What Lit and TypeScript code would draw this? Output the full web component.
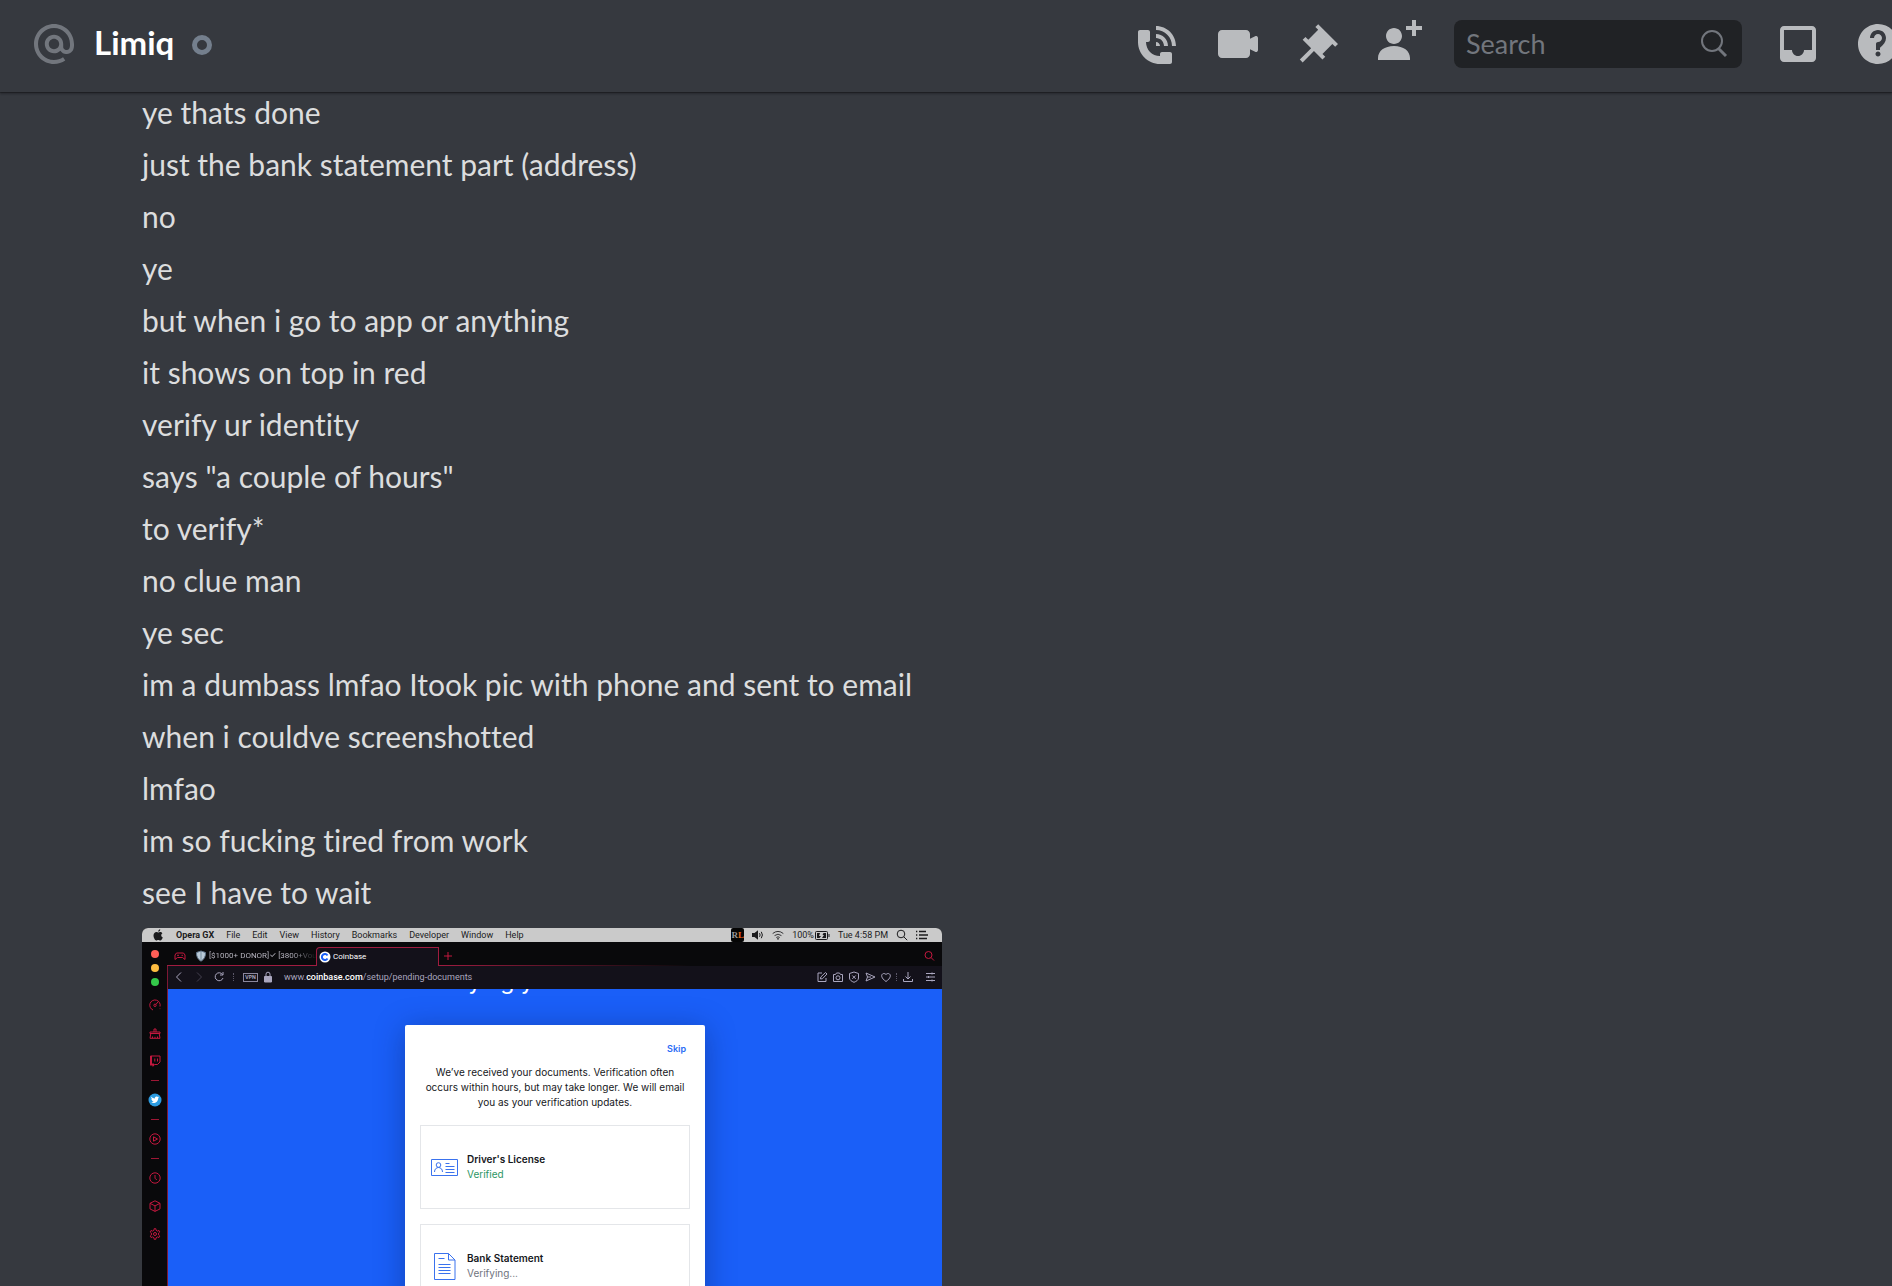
import { LitElement, html, svg, css } from "lit";
import { customElement, property } from "lit/decorators.js";

const messages = [
  "ye thats done",
  "just the bank statement part (address)",
  "no",
  "ye",
  "but when i go to app or anything",
  "it shows on top in red",
  "verify ur identity",
  'says "a couple of hours"',
  "to verify*",
  "no clue man",
  "ye sec",
  "im a dumbass lmfao Itook pic with phone and sent to email",
  "when i couldve screenshotted",
  "lmfao",
  "im so fucking tired from work",
  "see I have to wait",
];

const headerIcons = {
  at: svg`<path d="M12 2C6.486 2 2 6.486 2 12C2 17.515 6.486 22 12 22C14.039 22 15.993 21.398 17.652 20.259L16.521 18.611C15.195 19.519 13.633 20 12 20C7.589 20 4 16.411 4 12C4 7.589 7.589 4 12 4C16.411 4 20 7.589 20 12V12.782C20 14.17 19.402 15 18.4 15L18.398 15.018C18.338 15.005 18.273 15 18.209 15H18C17.437 15 16.6 14.182 16.6 13.631V12C16.6 9.464 14.537 7.4 12 7.4C9.463 7.4 7.4 9.463 7.4 12C7.4 14.537 9.463 16.6 12 16.6C13.234 16.6 14.35 16.106 15.177 15.313C15.826 16.269 16.93 17 18 17L18.002 16.981C18.064 16.994 18.129 17 18.195 17H18.4C20.552 17 22 15.306 22 12.782V12C22 6.486 17.514 2 12 2ZM12 14.599C10.566 14.599 9.4 13.433 9.4 11.999C9.4 10.565 10.566 9.399 12 9.399C13.434 9.399 14.6 10.565 14.6 11.999C14.6 13.433 13.434 14.599 12 14.599Z"/>`,
  call: svg`<path d="M11 5V3C16.515 3 21 7.486 21 13H19C19 8.589 15.411 5 11 5ZM17 13H15C15 10.795 13.206 9 11 9V7C14.309 7 17 9.691 17 13ZM11 11V13H13C13 11.896 12.105 11 11 11ZM14 16H18C18.553 16 19 16.447 19 17V21C19 21.553 18.553 22 18 22H13C6.925 22 2 17.075 2 11V6C2 5.447 2.448 5 3 5H7C7.553 5 8 5.447 8 6V10C8 10.553 7.553 11 7 11H6C6.063 14.938 9 18 13 18V17C13 16.447 13.447 16 14 16Z"/>`,
  video: svg`<path d="M21.526 8.149C21.231 7.966 20.862 7.951 20.553 8.105L18 9.382V7C18 5.897 17.103 5 16 5H4C2.897 5 2 5.897 2 7V17C2 18.104 2.897 19 4 19H16C17.103 19 18 18.104 18 17V14.618L20.553 15.894C20.694 15.965 20.847 16 21 16C21.183 16 21.365 15.949 21.526 15.851C21.82 15.668 22 15.347 22 15V9C22 8.653 21.82 8.332 21.526 8.149Z"/>`,
  pin: svg`<path d="M22 12L12.101 2.101L10.686 3.514L12.101 4.929L7.151 9.878V9.88L5.736 8.465L4.322 9.88L8.565 14.122L2.908 19.778L4.322 21.192L9.979 15.536L14.222 19.778L15.636 18.364L14.222 16.95L19.171 12H19.172L20.586 13.414L22 12Z"/>`,
  add: svg`<path d="M21 3H24V5H21V8H19V5H16V3H19V0H21V3ZM10 12C12.205 12 14 10.205 14 8C14 5.795 12.205 4 10 4C7.795 4 6 5.795 6 8C6 10.205 7.795 12 10 12ZM10 13C5.289 13 2 15.467 2 19V20H18V19C18 15.467 14.711 13 10 13Z"/>`,
  inbox: svg`<path d="M19 3H4.99C3.88 3 3.01 3.89 3.01 5L3 19C3 20.1 3.88 21 4.99 21H19C20.1 21 21 20.1 21 19V5C21 3.89 20.1 3 19 3ZM19 15H15C15 16.66 13.65 18 12 18C10.35 18 9 16.66 9 15H4.99V5H19V15Z"/>`,
  help: svg`<path d="M12 2C6.486 2 2 6.487 2 12C2 17.515 6.486 22 12 22C17.514 22 22 17.515 22 12C22 6.487 17.514 2 12 2ZM12 18.25C11.31 18.25 10.75 17.691 10.75 17C10.75 16.31 11.31 15.75 12 15.75C12.69 15.75 13.25 16.31 13.25 17C13.25 17.691 12.69 18.25 12 18.25ZM13 13.875V15H11V12C11 11.448 11.448 11 12 11C13.104 11 14 10.103 14 9C14 7.896 13.104 7 12 7C10.896 7 10 7.896 10 9H8C8 6.795 9.795 5 12 5C14.205 5 16 6.795 16 9C16 10.861 14.723 12.429 13 13.875Z"/>`,
};

const icon24 = (body: unknown) =>
  html`<svg class="icon" viewBox="0 0 24 24" aria-hidden="true">${body}</svg>`;

@customElement("chat-header")
class ChatHeader extends LitElement {
  static styles = css`
    :host {
      display: block;
      position: relative;
      z-index: 1;
      box-shadow: 0 1px 0 rgba(4, 4, 5, 0.25), 0 2px 2px rgba(4, 4, 5, 0.3);
    }
    .bar {
      display: flex;
      align-items: center;
      height: 92px;
      padding: 0 0 4px 30px;
      box-sizing: border-box;
      overflow: hidden;
      background: #36393f;
    }
    .icon {
      display: block;
      width: 48px;
      height: 48px;
      fill: currentColor;
      overflow: visible;
    }
    .at {
      color: #72767d;
    }
    .name {
      margin: 0 0 4px 16px;
      font: 700 33px/40px Lato, "Open Sans", sans-serif;
      color: #fff;
    }
    .status {
      width: 20px;
      height: 20px;
      margin: 2px 0 0 18px;
      box-sizing: border-box;
      border: 5px solid #747f8d;
      border-radius: 50%;
    }
    .tools {
      display: flex;
      flex: none;
      gap: 32px;
      margin: 0 -10px 0 auto;
    }
    button {
      display: block;
      padding: 0;
      border: 0;
      background: none;
      color: #b9bbbe;
      cursor: pointer;
    }
    .search {
      display: flex;
      align-items: center;
      width: 288px;
      height: 48px;
      padding: 0 14px 0 12px;
      box-sizing: border-box;
      border-radius: 8px;
      background: #202225;
      color: #72767d;
    }
    input {
      flex: 1;
      min-width: 0;
      padding: 0;
      border: 0;
      outline: 0;
      background: none;
      color: #dcddde;
      font: 400 27px/40px Lato, "Open Sans", sans-serif;
    }
    input::placeholder {
      color: #72767d;
      opacity: 1;
    }
    .glass {
      width: 32px;
      height: 32px;
      fill: none;
      stroke: currentColor;
      stroke-width: 2;
    }
  `;

  private tool(label: string, body: unknown) {
    return html`<button type="button" aria-label=${label}>${icon24(body)}</button>`;
  }

  render() {
    return html`
      <header class="bar">
        <span class="at">${icon24(headerIcons.at)}</span>
        <h1 class="name">Limiq</h1>
        <span class="status" role="img" aria-label="Offline"></span>
        <div class="tools">
          ${this.tool("Start voice call", headerIcons.call)}
          ${this.tool("Start video call", headerIcons.video)}
          ${this.tool("Pinned messages", headerIcons.pin)}
          ${this.tool("Add friends to DM", headerIcons.add)}
          <label class="search">
            <input type="text" placeholder="Search" aria-label="Search" />
            <svg class="glass" viewBox="0 0 32 32" aria-hidden="true">
              <circle cx="16" cy="13" r="10" />
              <path d="M22 20l8 8" stroke-width="3" />
            </svg>
          </label>
          ${this.tool("Inbox", headerIcons.inbox)} ${this.tool("Help", headerIcons.help)}
        </div>
      </header>
    `;
  }
}

const s = (body: unknown, cls = "") =>
  html`<svg class="ico ${cls}" viewBox="0 0 12 12" aria-hidden="true">${body}</svg>`;

const railIcons = [
  ["Limiter", svg`<path d="M4 11A5.2 5.2 0 1 1 11 7.500M11 9.500v.6"/><circle cx="6" cy="6.300" r="1.200"/><path d="M7 5.300l2-2.300"/>`],
  ["Cleaner", svg`<path d="M1 5h10v1.500H1zM1.800 6.500L1 11.300h10l-.8-4.800M5 5V2h2v3M3.500 11V9.500M6 11V9.800M8.500 11V9.500"/>`],
  ["Twitch", svg`<path d="M1.500 1h9.500v6l-2.500 2.500h-3L4 11.300V9.500H1.500z"/><path d="M2 1v8.500h3" stroke-width="2"/><path d="M5.800 3.500v3M8.500 3.500v3"/>`],
] as const;

const railTools = [
  ["History", svg`<circle cx="6" cy="6" r="5.200"/><path d="M6 3v3.200l1.800 1.800"/>`],
  ["Extensions", svg`<path d="M6 .8l5 2.500v5.600l-5 2.500-5-2.500V3.300zM1 3.300l5 2.600 5-2.600M6 5.900v5.400"/>`],
  ["Settings", svg`<path d="M4.900 2.300L5.200.7h1.600l.3 1.600 1.300.8 1.600-.6.8 1.400-1.200 1.100v2l1.200 1.100-.8 1.400-1.600-.6-1.300.8-.3 1.600H5.200l-.3-1.600-1.300-.8-1.600.6-.8-1.400L2.400 7V5L1.200 3.900 2 2.500l1.600.6z"/><circle cx="6" cy="6" r="1.500"/>`],
] as const;

@customElement("browser-shot")
class BrowserShot extends LitElement {
  static styles = css`
    :host {
      display: block;
      border-radius: 6px 6px 0 0;
      overflow: hidden;
      background: #09090b;
      color: #1b1b1d;
      font: 400 9px/14px Roboto, Inter, sans-serif;
    }
    .row {
      display: flex;
      align-items: center;
    }
    button {
      display: flex;
      align-items: center;
      justify-content: center;
      padding: 0;
      border: 0;
      background: none;
      color: inherit;
      font: inherit;
      white-space: nowrap;
    }
    .ico {
      display: block;
      flex: none;
      width: 12px;
      height: 12px;
      fill: none;
      stroke: currentColor;
      stroke-width: 1;
    }
    .solid {
      fill: currentColor;
      stroke: none;
    }
    .menubar {
      gap: 12px;
      height: 14px;
      padding: 0 14px 0 10px;
      background: #cacaca;
    }
    .menubar .app {
      font-weight: 700;
    }
    .tray {
      display: flex;
      align-items: center;
      gap: 8px;
      margin-left: auto;
    }
    .badge {
      width: 13px;
      height: 14px;
      border-radius: 2px;
      background: #050505;
      color: #9a9a9a;
      font: 700 9px/14px "Liberation Serif", serif;
      text-align: center;
    }
    .badge b {
      color: #e8641f;
    }
    .power {
      display: flex;
      align-items: center;
      gap: 1px;
    }
    .battery {
      width: 15px;
      height: 9px;
    }
    .window {
      display: grid;
      grid-template-columns: 25px 1fr;
    }
    .rail {
      display: flex;
      flex-direction: column;
      align-items: center;
      color: #c4183f;
    }
    .lights {
      display: flex;
      flex-direction: column;
      gap: 6px;
      padding-top: 8px;
    }
    .light {
      width: 8px;
      height: 8px;
      border-radius: 50%;
      background: #ff5f57;
    }
    .light.min {
      background: #fdbc40;
    }
    .light.max {
      background: #34c84a;
    }
    .group {
      display: flex;
      flex-direction: column;
      gap: 16px;
      padding: 13px 0;
    }
    .rule {
      width: 8px;
      height: 1px;
      background: #9e1735;
    }
    .bird {
      width: 14px;
      height: 14px;
      margin: 12px 0;
    }
    .body {
      min-width: 0;
    }
    .tabs {
      display: flex;
      align-items: stretch;
      height: 24px;
      color: #cfccd9;
      font-size: 8px;
    }
    .tab {
      display: flex;
      align-items: center;
      justify-content: flex-start;
      gap: 2px;
      border-bottom: 1px solid #a01c40;
      box-sizing: border-box;
      padding-top: 4px;
    }
    .start {
      width: 25px;
      color: #c4183f;
      justify-content: center;
    }
    .donor {
      width: 124px;
      padding-left: 3px;
      color: #b5b3bd;
    }
    .donor .label {
      white-space: nowrap;
      -webkit-mask-image: linear-gradient(90deg, #000 75%, transparent);
      mask-image: linear-gradient(90deg, #000 75%, transparent);
    }
    .current {
      width: 123px;
      height: 19px;
      margin-top: 5px;
      padding: 0 2px;
      border: 1px solid #a01c40;
      border-bottom: 0;
      border-top-left-radius: 4px;
      background: #13111a;
      color: #fff;
    }
    .rest {
      flex: 1;
      justify-content: space-between;
      padding: 4px 7px 0 3px;
      color: #c4183f;
      border-image: linear-gradient(90deg, #a01c40, transparent 50%) 1;
    }
    .address {
      gap: 8px;
      height: 23px;
      padding: 0 6px 1px 5px;
      box-sizing: border-box;
      border-left: 1px solid #7d1834;
      background: #13111a;
      color: #aaa6be;
    }
    .address .nav {
      display: flex;
      gap: 8px;
    }
    .dots {
      width: 2px;
      height: 8px;
      border-left: 1px dotted #5c586a;
      box-sizing: border-box;
    }
    .dim {
      color: #44414f;
    }
    .vpn {
      width: 15px;
      height: 9px;
      border: 1px solid #8b879d;
      box-sizing: border-box;
      font: 700 5px/7px Inter, sans-serif;
      text-align: center;
    }
    .secure {
      display: flex;
      align-items: center;
      gap: 4px;
    }
    .url b {
      color: #fff;
      font-weight: 500;
    }
    .url {
      margin-left: 2px;
      white-space: nowrap;
    }
    .actions {
      display: flex;
      align-items: center;
      gap: 4px;
      margin-left: auto;
    }
    .actions .wide {
      margin-left: 6px;
    }
    .page {
      display: flex;
      flex-direction: column;
      align-items: center;
      height: 420px;
      overflow: hidden;
      border-left: 1px solid #7d1834;
      background: #1a5ff8;
    }
    .heading {
      height: 5px;
      margin: 0 0 31px;
      padding-left: 4px;
      display: flex;
      align-items: flex-end;
      overflow: hidden;
      color: #fff;
      font: 400 23px/25px Inter, sans-serif;
    }
    .card {
      display: flex;
      flex-direction: column;
      width: 300px;
      height: 380px;
      flex: none;
      padding: 16px 15px;
      box-sizing: border-box;
      border-radius: 2px;
      background: #fff;
      color: #16181c;
      box-shadow: 0 4px 30px rgba(10, 30, 90, 0.4);
      font: 400 10px/15px Inter, sans-serif;
    }
    .skip {
      align-self: flex-end;
      margin-right: 4px;
      color: #2b6cf6;
      font-weight: 600;
      font-size: 9px;
      text-decoration: none;
    }
    .note {
      margin: 9px 0 15px;
      text-align: center;
    }
    .doc {
      display: flex;
      align-items: center;
      gap: 9px;
      height: 84px;
      margin-bottom: 15px;
      padding: 0 10px;
      box-sizing: border-box;
      border: 1px solid #e4e6e9;
    }
    .doc svg {
      width: 27px;
      height: 27px;
      fill: none;
      stroke: #3a72ee;
      stroke-width: 1;
    }
    .doc h2,
    .doc p {
      margin: 0;
      font-size: 10px;
      line-height: 15px;
    }
    .doc h2 {
      font-weight: 600;
    }
    .verified {
      color: #2d9664;
    }
    .pending {
      color: #70747e;
    }
  `;

  render() {
    return html`
      <div class="menubar row">
        ${s(svg`<path d="M8.200 3c.8 0 1.700.4 2.200 1.200-1.800 1.100-1.500 3.500.4 4.300-.5 1.300-1.500 2.900-2.500 2.900-.8 0-1-.5-2-.5s-1.300.5-2 .5C3 11.400 1.500 8.800 1.500 6.500S3 3 4.400 3c.8 0 1.400.5 2 .5S7.400 3 8.200 3zM6.300 2.700C6.200 1.500 7.100.5 8.200.3 8.400 1.600 7.300 2.700 6.300 2.700z"/>`, "solid")}
        <button type="button" class="app">Opera GX</button>
        ${["File", "Edit", "View", "History", "Bookmarks", "Developer", "Window", "Help"].map(
          (m) => html`<button type="button">${m}</button>`
        )}
        <div class="tray">
          <span class="badge">R<b>L</b></span>
          ${s(svg`<path d="M0 4h2.500L6 1.300v9.400L2.500 8H0z" fill="currentColor" stroke="none"/><path d="M7.500 4.200q1.300 1.800 0 3.600M9.300 2.800q2.200 3.200 0 6.400"/>`)}
          <svg class="ico" viewBox="0 0 14 12" aria-hidden="true"><path d="M.8 4.300q6.200-5 12.400 0M3 6.700q4-3.300 8 0M5 8.900q2-1.600 4 0"/><circle cx="7" cy="10.500" r=".6"/></svg>
          <span class="power">100%
            <svg class="battery" viewBox="0 0 15 9" aria-hidden="true"><rect x=".5" y=".5" width="12" height="8" rx="1" fill="none" stroke="#1b1b1d"/><path d="M2 2h3L4 5h2L4.500 7H2zM8.500 2H11v5H7l2-3H7.500zM13.500 3v3h1V3z" fill="#1b1b1d"/></svg>
          </span>
          <span>Tue 4:58 PM</span>
          ${s(svg`<circle cx="5" cy="5" r="3.800"/><path d="M7.800 7.800l3.400 3.400"/>`)}
          ${s(svg`<path d="M0 2.500h1.300M0 6h1.300M0 9.500h1.300M3 2.500h7M3 6h9M3 9.500h8" stroke-width="1.500"/>`)}
        </div>
      </div>
      <div class="window">
        <nav class="rail" aria-label="Sidebar">
          <div class="lights">
            <span class="light"></span><span class="light min"></span><span class="light max"></span>
          </div>
          <div class="group">
            ${railIcons.map(([l, b]) => html`<button type="button" aria-label=${l}>${s(b)}</button>`)}
          </div>
          <span class="rule"></span>
          <svg class="bird" viewBox="0 0 14 14" role="img" aria-label="Twitter">
            <circle cx="7" cy="7" r="6.500" fill="#2c9be0" />
            <path fill="#fff" d="M3.300 3.800C4.400 5 5.500 5.400 6.900 5.500c-.3-1.500 1.600-2.600 2.800-1.500l1.200-.3-.7 1 .8-.1-.9.9c.1 3.400-3.400 5.700-6.900 4 1 0 1.700-.2 2.400-.7-.8-.1-1.400-.5-1.600-1.200h.7C3.900 7.300 3.400 6.700 3.400 5.900l.7.200C3.300 5.500 3 4.600 3.300 3.800z" />
          </svg>
          <span class="rule"></span>
          <div class="group">
            <button type="button" aria-label="Player">
              ${s(svg`<circle cx="6" cy="6" r="5.200"/><path d="M4.500 3.800L8.500 6l-4 2.200z"/>`)}
            </button>
          </div>
          <span class="rule"></span>
          <div class="group">
            ${railTools.map(([l, b]) => html`<button type="button" aria-label=${l}>${s(b)}</button>`)}
          </div>
        </nav>
        <div class="body">
          <div class="tabs">
            <button type="button" class="tab start" aria-label="GX Corner">
              ${s(svg`<path d="M2.500 3h7L11 5v4.500L8.500 7.500h-5L1 9.500V5zM3 5.300h2M7.500 5.300h1.500"/>`)}
            </button>
            <button type="button" class="tab donor">
              <svg class="ico" viewBox="0 0 12 12" aria-hidden="true"><path d="M6 1l4.500 1.500c.3 4-1.500 7-4.500 8.700C3 9.500 1.200 6.500 1.500 2.500z" fill="#b9cad8" stroke="#5e7388"/><path d="M6 2v8" stroke="#78909f"/></svg>
              <span class="label">[$1000+ DONOR]✓ [3800+Vou</span>
            </button>
            <button type="button" class="tab current">
              <svg class="ico" viewBox="0 0 12 12" aria-hidden="true"><circle cx="6" cy="6" r="5.500" fill="#fff" stroke="none"/><path d="M8.500 4.500a3 3 0 1 0 0 3" stroke="#1a5ff8" stroke-width="2"/></svg>
              Coinbase
            </button>
            <div class="tab rest">
              <button type="button" aria-label="New tab">${s(svg`<path d="M6 2v8M2 6h8"/>`)}</button>
              <button type="button" aria-label="Search tabs">${s(svg`<circle cx="5.500" cy="5" r="3.500"/><path d="M8 7.500l3 3"/>`)}</button>
            </div>
          </div>
          <div class="address row">
            <div class="nav">
              <button type="button" aria-label="Back">${s(svg`<path d="M8 1.500L3.500 6 8 10.500"/>`)}</button>
              <button type="button" class="dim" aria-label="Forward">${s(svg`<path d="M4 1.500L8.500 6 4 10.500"/>`)}</button>
              <button type="button" aria-label="Reload">${s(svg`<path d="M9.500 3.500A4 4 0 1 0 10 7M10 1v3H7"/>`)}</button>
            </div>
            <span class="dots"></span>
            <span class="secure">
              <span class="vpn">VPN</span>
              ${s(svg`<path d="M2.500 5.500h7V11h-7z" fill="currentColor"/><path d="M4 5.500V3.200a2 2 0 0 1 4 0v2.300"/>`)}
            </span>
            <span class="url">www.<b>coinbase.com</b>/setup/pending-documents</span>
            <div class="actions">
              <button type="button" aria-label="Edit page">${s(svg`<path d="M6 2H2v8.500h8V7M4.500 8l.3-2 4.700-4.500L11 3 6.500 7.700z"/>`)}</button>
              <button type="button" aria-label="Snapshot">${s(svg`<path d="M1.500 3.500h2L4.500 2h3l1 1.500h2v7h-9z"/><circle cx="6" cy="6.800" r="2"/>`)}</button>
              <button type="button" aria-label="Ad blocker">${s(svg`<path d="M6 1l4.500 1.500V7c0 2-2 3.300-4.500 4.300C3.500 10.300 1.500 9 1.500 7V2.500zM4.300 4.500l3.400 3.400M7.700 4.500L4.300 7.900"/>`)}</button>
              <button type="button" aria-label="Send">${s(svg`<path d="M2 2l9 4-9 4 1.500-4zM3.500 6H7"/>`)}</button>
              <button type="button" aria-label="Bookmark">${s(svg`<path d="M6 10.500C-2 5 3 .5 6 3.500 9 .5 14 5 6 10.500z"/>`)}</button>
              <span class="dots"></span>
              <button type="button" aria-label="Downloads">${s(svg`<path d="M6 1v7M3.500 5.500L6 8l2.500-2.500M1.500 8v2.500h9V8"/>`)}</button>
              <button type="button" class="wide" aria-label="Easy setup">${s(svg`<path d="M2 2.500h9M2 6h9M2 9.500h9M8 1.500v2M4.500 5v2M8 8.500v2"/>`)}</button>
            </div>
          </div>
          <div class="page">
            <div class="heading">Verifying your documents</div>
            <div class="card">
              <a class="skip" href="#skip">Skip</a>
              <p class="note">
                We’ve received your documents. Verification often occurs within hours, but may take
                longer. We will email you as your verification updates.
              </p>
              <div class="doc">
                <svg viewBox="0 0 27 27" aria-hidden="true"><path d="M.5 5.500h26v16H.5z"/><circle cx="7.500" cy="11" r="2.300"/><path d="M3.500 18c0-6 8-6 8 0M14.500 9.500h4M14.500 12.500h9M14.500 15.500h9M14.500 18.500h9"/></svg>
                <div>
                  <h2>Driver's License</h2>
                  <p class="verified">Verified</p>
                </div>
              </div>
              <div class="doc">
                <svg viewBox="0 0 27 27" aria-hidden="true"><path d="M3.500.5h14l6.500 6.500v19.500H3.500zM17.500.5V7H24M7.500 5.500h6M7.500 11.500h12M7.500 14.500h12M7.500 17.500h12M7.500 20.500h12"/></svg>
                <div>
                  <h2>Bank Statement</h2>
                  <p class="pending">Verifying...</p>
                </div>
              </div>
            </div>
          </div>
        </div>
      </div>
    `;
  }
}

@customElement("app-root")
class AppRoot extends LitElement {
  @property({ attribute: false }) lines = messages;

  static styles = css`
    :host {
      display: flex;
      flex-direction: column;
      height: 100vh;
      overflow: hidden;
      background: #36393f;
      color: #dcddde;
      font: 400 30px/40px Lato, "Open Sans", sans-serif;
      font-variant-ligatures: none;
    }
    .thread {
      flex: 1;
      min-height: 0;
      overflow: hidden;
      padding: 0 142px;
    }
    .list {
      display: flex;
      flex-direction: column;
      gap: 12px;
      margin: 0 0 16px;
      padding: 0;
      list-style: none;
    }
    .shot {
      max-width: 800px;
    }
  `;

  render() {
    return html`
      <chat-header></chat-header>
      <main class="thread">
        <ul class="list">
          ${this.lines.map((line) => html`<li>${line}</li>`)}
        </ul>
        <browser-shot class="shot"></browser-shot>
      </main>
    `;
  }
}
